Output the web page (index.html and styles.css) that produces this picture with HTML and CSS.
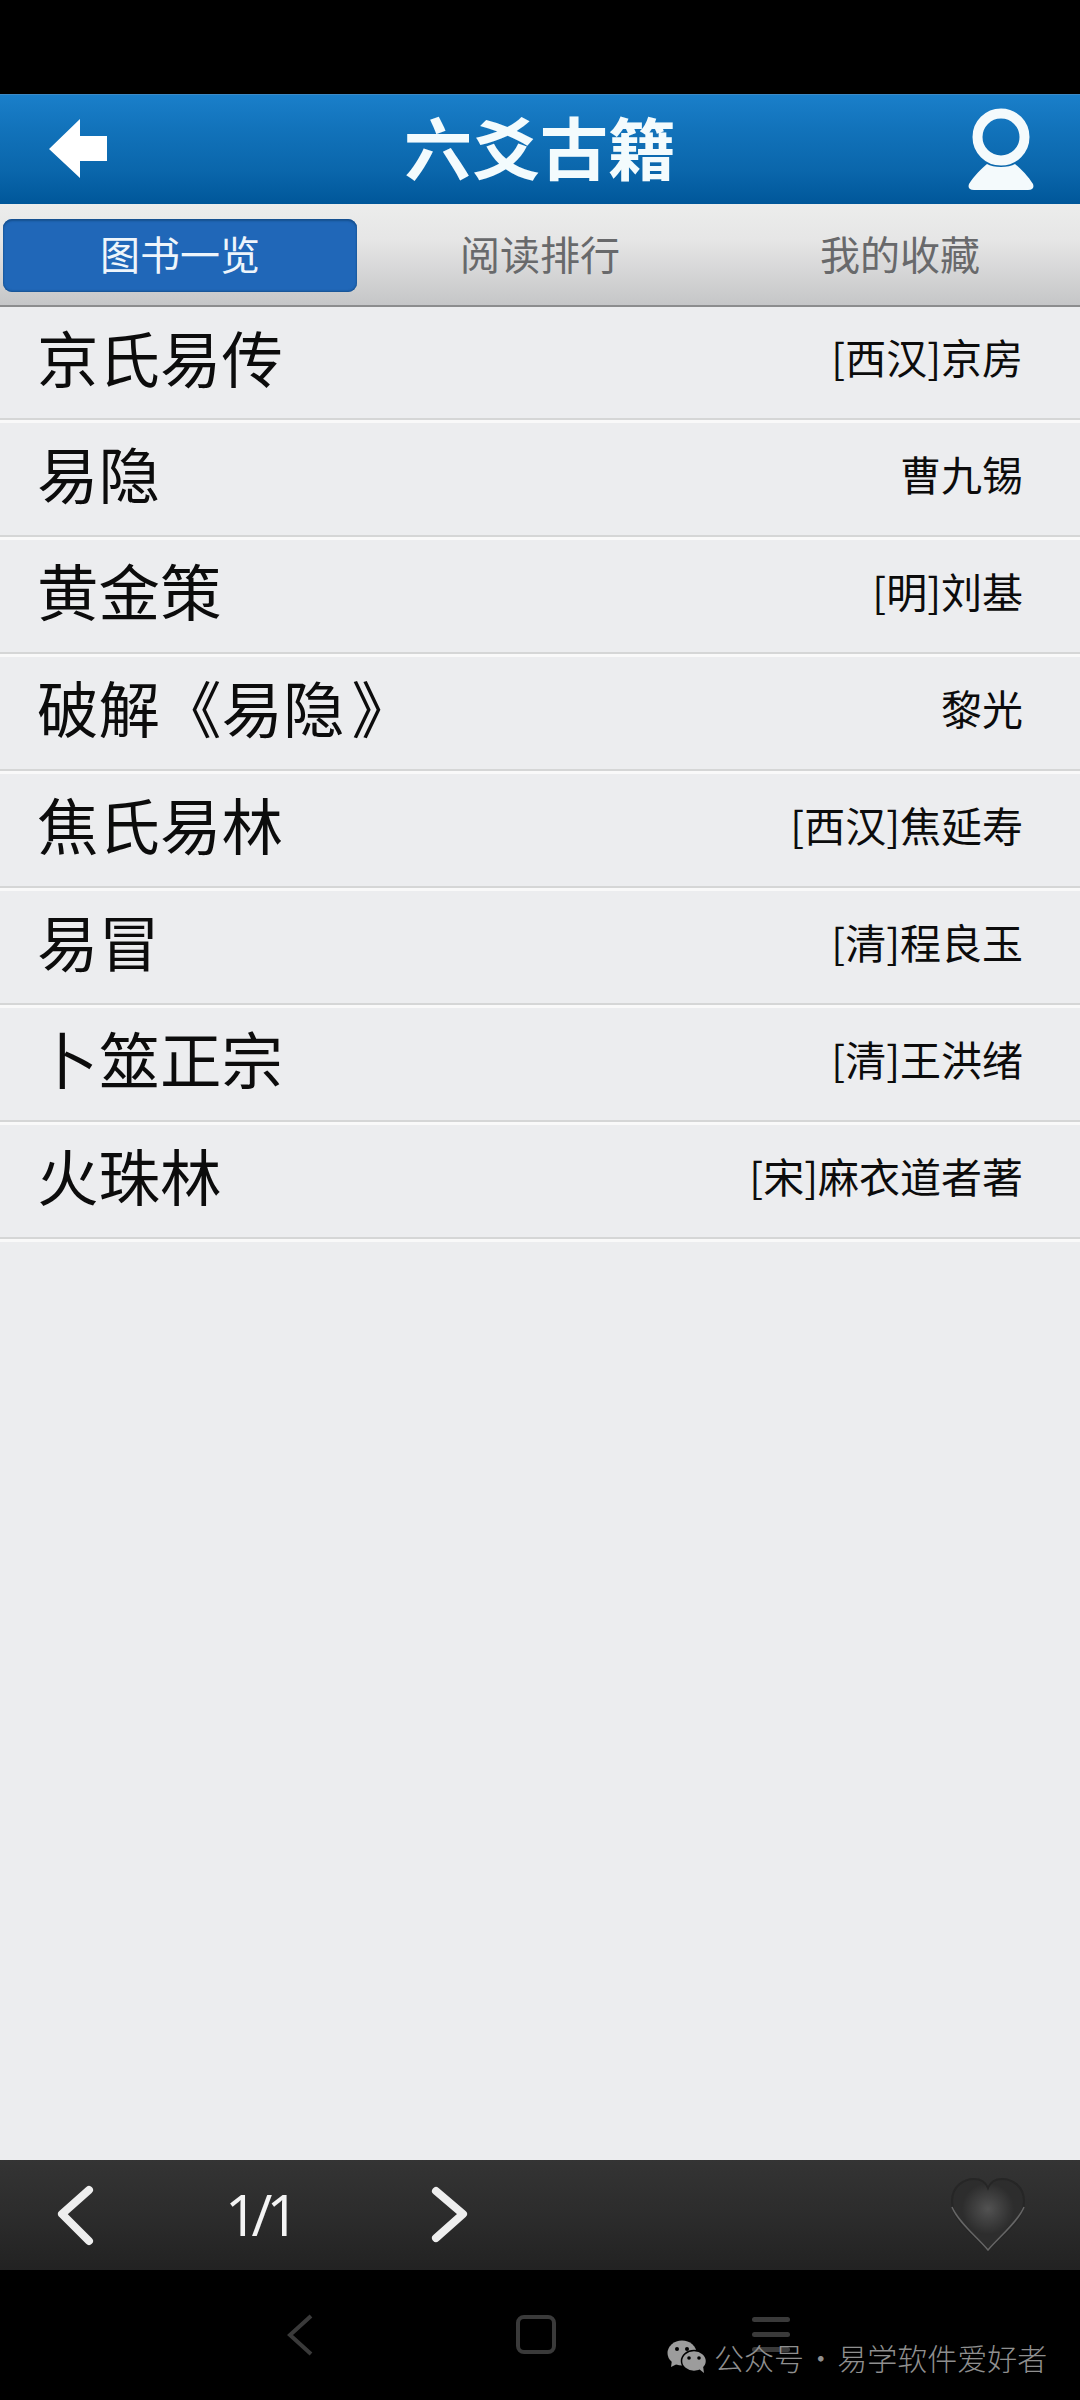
FILE: index.html
```html
<!DOCTYPE html>
<html lang="zh-CN">
<head>
<meta charset="utf-8">
<title>六爻古籍</title>
<link rel="stylesheet" href="styles.css">
</head>
<body>
<div class="screen">
  <div class="top-black"></div>
  <header class="header">
    <svg class="back" width="62" height="62" viewBox="0 0 62 62"><path d="M2 31 L33 1 L33 18 L60 18 L60 43 L33 43 L33 60 Z" fill="#fff"/></svg>
    <h1 class="title">六爻古籍</h1>
    <svg class="user" width="70" height="84" viewBox="0 0 70 84"><circle cx="35" cy="29" r="23.5" fill="none" stroke="#f4fafc" stroke-width="10"/><path d="M21 56 C27 60 43 60 49 56 C54 60 62 68 67 76 Q69 82 62 82 L8 82 Q1 82 3 76 C8 68 16 60 21 56 Z" fill="#f4fafc"/></svg>
  </header>
  <nav class="tabs">
    <div class="tab tab-active">图书一览</div>
    <div class="tab">阅读排行</div>
    <div class="tab">我的收藏</div>
  </nav>
  <main class="list">
    <div class="row"><span class="name">京氏易传</span><span class="author">[西汉]京房</span></div>
    <div class="row"><span class="name">易隐</span><span class="author">曹九锡</span></div>
    <div class="row"><span class="name">黄金策</span><span class="author">[明]刘基</span></div>
    <div class="row"><span class="name">破解《易隐<span class="close-quote">》</span></span><span class="author">黎光</span></div>
    <div class="row"><span class="name">焦氏易林</span><span class="author">[西汉]焦延寿</span></div>
    <div class="row"><span class="name">易冒</span><span class="author">[清]程良玉</span></div>
    <div class="row"><span class="name">卜筮正宗</span><span class="author">[清]王洪绪</span></div>
    <div class="row"><span class="name">火珠林</span><span class="author">[宋]麻衣道者著</span></div>
  </main>
  <footer class="pager">
    <svg class="pg-prev" width="40" height="64" viewBox="0 0 40 64"><path d="M33 7 L6 31 L33 58" fill="none" stroke="#eee" stroke-width="8" stroke-linecap="round" stroke-linejoin="round"/></svg>
    <span class="pg-num">1/1</span>
    <svg class="pg-next" width="40" height="64" viewBox="0 0 40 64"><path d="M6 8 L33 31 L6 55" fill="none" stroke="#eee" stroke-width="8" stroke-linecap="round" stroke-linejoin="round"/></svg>
    <svg class="pg-heart" width="76" height="78" viewBox="0 0 76 78">
      <defs><radialGradient id="hg" cx="50%" cy="42%" r="36%"><stop offset="0" stop-color="#525252"/><stop offset="1" stop-color="#2d2d2d"/></radialGradient></defs>
      <path d="M38 74 C26 60 2 46 2 25 C2 10 14 3 24 3 C31 3 36 7 38 12 C40 7 45 3 52 3 C62 3 74 10 74 25 C74 46 50 60 38 74 Z" fill="url(#hg)" stroke="#262626" stroke-width="2"/>
      <path d="M2 31 C8 46 28 62 38 74 C48 62 68 46 74 31" fill="none" stroke="#666" stroke-width="1.500"/>
    </svg>
  </footer>
  <div class="sysbar">
    <svg class="sys-back" width="26" height="42" viewBox="0 0 26 42"><path d="M24 2 L3 21 L24 40" fill="none" stroke="#3a3a3a" stroke-width="4"/></svg>
    <div class="sys-home"></div>
    <div class="sys-menu"><i></i><i></i><i></i></div>
    <div class="watermark">
      <svg class="wx" width="40" height="34" viewBox="0 0 40 34">
        <ellipse cx="15" cy="13" rx="14.500" ry="12.500" fill="#9c9c9c"/><path d="M5 20 L4 27 L12 23 Z" fill="#9c9c9c"/>
        <ellipse cx="27" cy="21" rx="12.500" ry="10.500" fill="#9c9c9c" stroke="#000" stroke-width="1.500"/><path d="M32 29 L37 33 L36 26 Z" fill="#9c9c9c"/>
        <circle cx="10" cy="9" r="2" fill="#000"/><circle cx="20" cy="9" r="2" fill="#000"/><circle cx="22" cy="18" r="1.800" fill="#000"/><circle cx="32" cy="18" r="1.800" fill="#000"/>
      </svg>
      <span class="wm-text">公众号 · 易学软件爱好者</span>
    </div>
  </div>
</div>
</body>
</html>
```
FILE: styles.css
```css
* { box-sizing: border-box; }
html, body { margin: 0; padding: 0; background: #000; }
.screen {
  width: 1080px;
  height: 2400px;
  display: flex;
  flex-direction: column;
  overflow: hidden;
  font-family: "Noto Sans CJK SC", "Liberation Sans", sans-serif;
  background: #000;
}
.top-black { height: 94px; flex: none; background: #000; }

.header {
  position: relative;
  height: 110px;
  flex: none;
  display: flex;
  align-items: center;
  justify-content: center;
  background: linear-gradient(#1a7fca 0%, #1273bb 30%, #0a66ab 70%, #00579a 100%);
  border-top: 1px solid #3c8ac6;
}
.back { position: absolute; left: 47px; top: 23px; }
.user { position: absolute; left: 966px; top: 13px; }
.title {
  margin: 0;
  padding-bottom: 8px;
  font-size: 68px;
  line-height: 1;
  font-weight: 700;
  color: #f3fbfd;
}

.tabs {
  height: 103px;
  flex: none;
  display: grid;
  grid-template-columns: 360px 360px 360px;
  align-items: start;
  padding-top: 15px;
  background: linear-gradient(#ecedec 0%, #e6e6e6 35%, #c9cacb 92%, #c5c6c8 100%);
  border-bottom: 2px solid #8c8d8e;
}
.tab {
  height: 73px;
  display: flex;
  align-items: center;
  justify-content: center;
  font-size: 40px;
  color: #68696b;
  padding-bottom: 5px;
}
.tab-active {
  width: 354px;
  margin-left: 3px;
  background: #2067b8;
  border-radius: 9px;
  color: #eef5fb;
  box-shadow: inset 0 2px 2px #16508f, inset 0 -1px 2px #16508f;
}

.list { flex: 1; background: #ecedef; min-height: 0; }
.row {
  height: 114px;
  margin-bottom: 3px;
  display: flex;
  align-items: center;
  justify-content: space-between;
  padding: 0 57px 12px 37px;
  border-bottom: 2px solid #d5d6d6;
  box-shadow: 0 3px 0 #f9f9f9;
  color: #0c0c0c;
}
.row:first-child { height: 113px; }
.name { font-size: 61.500px; line-height: 1; }
.author { font-size: 41px; line-height: 1; }
.close-quote { margin-left: 7px; }

.pager {
  position: relative;
  height: 110px;
  flex: none;
  background: linear-gradient(#343434 0%, #2c2c2c 50%, #222 100%);
}
.pg-prev { position: absolute; left: 56px; top: 23px; }
.pg-next { position: absolute; left: 430px; top: 23px; }
.pg-num {
  position: absolute;
  left: 225px;
  top: 26px;
  font-family: "Open Sans", "Liberation Sans", sans-serif;
  font-size: 57px;
  line-height: 1;
  color: #f4f4f4;
  letter-spacing: -6px;
}
.pg-heart { position: absolute; left: 950px; top: 16px; }

.sysbar { position: relative; height: 130px; flex: none; background: #000; }
.sys-back { position: absolute; left: 287px; top: 44px; }
.sys-home {
  position: absolute;
  left: 516px;
  top: 45px;
  width: 40px;
  height: 39px;
  border: 4px solid #3a3a3a;
  border-radius: 8px;
}
.sys-menu {
  position: absolute;
  left: 752px;
  top: 47px;
  width: 38px;
  display: flex;
  flex-direction: column;
  gap: 10px;
}
.sys-menu i { display: block; height: 5px; border-radius: 3px; background: #3a3a3a; }
.watermark {
  position: absolute;
  left: 667px;
  top: 70px;
  display: flex;
  align-items: center;
  gap: 7px;
}
.wm-text { font-size: 30px; line-height: 1; font-weight: 300; color: #8f8f8f; white-space: nowrap; word-spacing: -5px; }
```
